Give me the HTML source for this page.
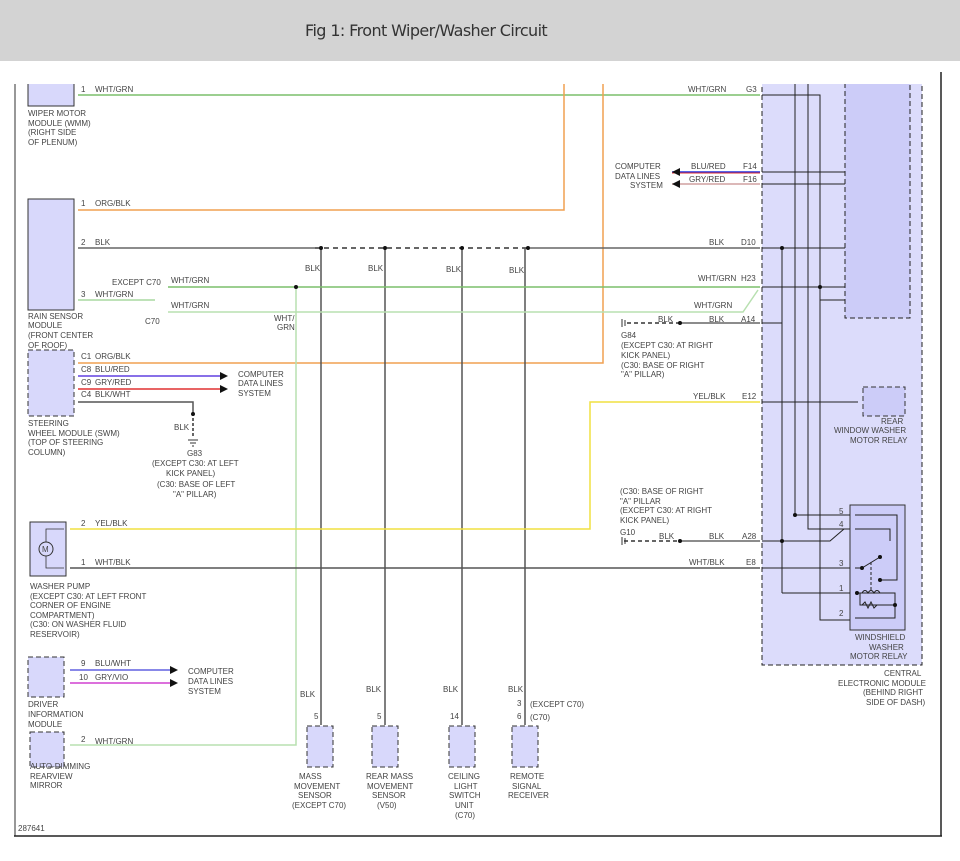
<!DOCTYPE html>
<html><head><meta charset="utf-8"><style>
html,body{margin:0;padding:0;background:#fff;width:960px;height:861px;overflow:hidden}
.hd{position:absolute;left:0;top:0;width:960px;height:61px;background:#d3d3d3;z-index:2}
.hd span{position:absolute;left:305px;top:21px;font:16px "DejaVu Sans","Liberation Sans",sans-serif;color:#333;letter-spacing:-0.6px}
svg{position:absolute;left:0;top:0}
text{font-family:"Liberation Sans",sans-serif;font-size:8px;fill:#444}
</style></head><body>
<div class="hd"><span>Fig 1: Front Wiper/Washer Circuit</span></div>
<svg width="960" height="861" viewBox="0 0 960 861">
<!-- CEM -->
<rect x="762" y="70" width="160" height="595" fill="#dcdcfb" stroke="#222" stroke-dasharray="5,3"/>
<rect x="845" y="70" width="65" height="248" fill="#ccccf8" stroke="#222" stroke-dasharray="5,3"/>
<!-- modules -->
<rect x="28" y="70" width="46" height="36" fill="#d8d8fb" stroke="#333"/>
<rect x="28" y="199" width="46" height="111" fill="#d8d8fb" stroke="#333"/>
<rect x="28" y="350" width="46" height="66" fill="#d8d8fb" stroke="#333" stroke-dasharray="5,3"/>
<rect x="30" y="522" width="36" height="54" fill="#d8d8fb" stroke="#333"/>
<circle cx="46" cy="549" r="7" fill="none" stroke="#333"/><text x="42" y="552" font-size="8">M</text>
<path d="M46 542V529H64M46 556V568H64" fill="none" stroke="#333" stroke-width=".8"/>
<rect x="28" y="657" width="36" height="40" fill="#d8d8fb" stroke="#333" stroke-dasharray="5,3"/>
<rect x="30" y="732" width="34" height="35" fill="#d8d8fb" stroke="#333" stroke-dasharray="5,3"/>
<rect x="307" y="726" width="26" height="41" fill="#d8d8fb" stroke="#333" stroke-dasharray="5,3"/>
<rect x="372" y="726" width="26" height="41" fill="#d8d8fb" stroke="#333" stroke-dasharray="5,3"/>
<rect x="449" y="726" width="26" height="41" fill="#d8d8fb" stroke="#333" stroke-dasharray="5,3"/>
<rect x="512" y="726" width="26" height="41" fill="#d8d8fb" stroke="#333" stroke-dasharray="5,3"/>
<rect x="863" y="387" width="42" height="29" fill="#ccccf8" stroke="#333" stroke-dasharray="5,3"/>
<rect x="850" y="505" width="55" height="125" fill="#ccccf8" stroke="#333"/>
<!-- wires -->
<g fill="none" stroke-width="1.5">
<line x1="78" y1="95" x2="760" y2="95" stroke="#7cbf6b"/>
<path d="M78 210H564V70" stroke="#f0a050"/>
<path d="M78 363H603V70" stroke="#f0a050"/>
<path d="M78 248H315" stroke="#666"/>
<path d="M315 248H530" stroke="#333" stroke-dasharray="5,4"/>
<path d="M530 248H760" stroke="#666"/>
<path d="M321 248V725M385 248V725M462 248V725M525 248V725" stroke="#555"/>
<path d="M78 300H155" stroke="#a8d8a0"/>
<path d="M168 287H760" stroke="#7cbf6b"/>
<path d="M168 312H743L758 290" stroke="#b8e0b0"/>
<path d="M296 287V745H70" stroke="#b8e0b0"/>
<path d="M627 323H680" stroke="#333" stroke-dasharray="4,3"/>
<path d="M680 323H760" stroke="#666"/>
<path d="M78 376H220" stroke="#6040e0"/>
<path d="M78 389H220" stroke="#e03030"/>
<path d="M78 402H193V416" stroke="#555"/>
<path d="M193 418V438" stroke="#333" stroke-dasharray="3,2"/>
<path d="M70 529H590V402H760" stroke="#f0e040"/>
<path d="M70 568H760" stroke="#555"/>
<path d="M70 670H170" stroke="#6060e0"/>
<path d="M70 683H170" stroke="#d040d0"/>
<path d="M672 172H760" stroke="#2030e0"/><path d="M672 172H760" stroke="#e03030" stroke-width="1" transform="translate(0,1)"/>
<path d="M672 184H760" stroke="#d0a0a0"/>
<path d="M624 541H680" stroke="#333" stroke-dasharray="4,3"/>
<path d="M680 541H760" stroke="#666"/>
</g>
<!-- CEM internal -->
<g fill="none" stroke="#222" stroke-width="1">
<path d="M762 95H820V620H850"/>
<path d="M795 70V515H850M808 70V529H850"/>
<path d="M762 172H845M762 184H845M762 248H845M762 287H845"/>
<path d="M820 300H845"/>
<path d="M782 248V323H762"/>
<path d="M762 402H858"/>
<path d="M762 541H830L844 529"/>
<path d="M762 568H850"/>
<path d="M782 593H850"/><path d="M782 248V593"/>
<path d="M855 529H890V541M855 515H897V580H880"/>
<path d="M855 568H862L880 557"/><path d="M871 562V590" stroke-dasharray="3,2"/>
<path d="M855 593H895V618H855M860 593V605H895"/>
<path d="M862 593q3-5 6 0q3-5 6 0q3-5 6 0"/><path d="M862 605l3-3 3 6 3-6 3 6 3-3h10"/>
</g>
<g fill="#111">
<circle cx="321" cy="248" r="2"/><circle cx="385" cy="248" r="2"/><circle cx="462" cy="248" r="2"/><circle cx="528" cy="248" r="2"/>
<circle cx="296" cy="287" r="2"/><circle cx="193" cy="414" r="2"/><circle cx="680" cy="323" r="2"/><circle cx="680" cy="541" r="2"/>
<circle cx="782" cy="248" r="2"/><circle cx="820" cy="287" r="2"/><circle cx="795" cy="515" r="2"/><circle cx="782" cy="541" r="2"/>
<circle cx="880" cy="557" r="2"/><circle cx="862" cy="568" r="2"/><circle cx="880" cy="580" r="2"/><circle cx="857" cy="593" r="2"/><circle cx="895" cy="605" r="2"/>
<path d="M220 372l8 4-8 4zM220 385l8 4-8 4zM170 666l8 4-8 4zM170 679l8 4-8 4zM680 168l-8 4 8 4zM680 180l-8 4 8 4z"/>
</g>
<path d="M188 440h10M190 443h6M192 446h2M622 319v8M625 320v6M622 537v8M625 538v6" stroke="#333"/>
<!-- white cover above frame -->
<rect x="0" y="61" width="960" height="23" fill="#fff"/>
<!-- frame -->
<line x1="15" y1="84" x2="15" y2="836" stroke="#777" stroke-width="1.5"/>
<line x1="14" y1="836" x2="942" y2="836" stroke="#222" stroke-width="1.5"/>
<line x1="941" y1="72" x2="941" y2="836" stroke="#222" stroke-width="1.5"/>
<!-- labels -->
<text x="81" y="92">1</text><text x="95" y="92">WHT/GRN</text>
<text x="28" y="116">WIPER MOTOR</text><text x="28" y="126">MODULE (WMM)</text><text x="28" y="135">(RIGHT SIDE</text><text x="28" y="145">OF PLENUM)</text>
<text x="81" y="206">1</text><text x="95" y="206">ORG/BLK</text>
<text x="81" y="245">2</text><text x="95" y="245">BLK</text>
<text x="81" y="297">3</text><text x="95" y="297">WHT/GRN</text>
<text x="112" y="285">EXCEPT C70</text><text x="171" y="283">WHT/GRN</text><text x="171" y="308">WHT/GRN</text><text x="145" y="324">C70</text>
<text x="274" y="321">WHT/</text><text x="277" y="330">GRN</text>
<text x="305" y="271">BLK</text><text x="368" y="271">BLK</text><text x="446" y="272">BLK</text><text x="509" y="273">BLK</text>
<text x="28" y="319">RAIN SENSOR</text><text x="28" y="328">MODULE</text><text x="28" y="338">(FRONT CENTER</text><text x="28" y="348">OF ROOF)</text>
<text x="81" y="359">C1</text><text x="95" y="359">ORG/BLK</text>
<text x="81" y="372">C8</text><text x="95" y="372">BLU/RED</text>
<text x="81" y="385">C9</text><text x="95" y="385">GRY/RED</text>
<text x="81" y="397">C4</text><text x="95" y="397">BLK/WHT</text>
<text x="238" y="377">COMPUTER</text><text x="238" y="386">DATA LINES</text><text x="238" y="396">SYSTEM</text>
<text x="174" y="430">BLK</text>
<text x="28" y="426">STEERING</text><text x="28" y="436">WHEEL MODULE (SWM)</text><text x="28" y="445">(TOP OF STEERING</text><text x="28" y="455">COLUMN)</text>
<text x="187" y="456">G83</text><text x="152" y="466">(EXCEPT C30: AT LEFT</text><text x="166" y="476">KICK PANEL)</text><text x="157" y="487">(C30: BASE OF LEFT</text><text x="173" y="497">"A" PILLAR)</text>
<text x="81" y="526">2</text><text x="95" y="526">YEL/BLK</text>
<text x="81" y="565">1</text><text x="95" y="565">WHT/BLK</text>
<text x="30" y="589">WASHER PUMP</text><text x="30" y="599">(EXCEPT C30: AT LEFT FRONT</text><text x="30" y="608">CORNER OF ENGINE</text><text x="30" y="618">COMPARTMENT)</text><text x="30" y="627">(C30: ON WASHER FLUID</text><text x="30" y="637">RESERVOIR)</text>
<text x="81" y="666">9</text><text x="95" y="666">BLU/WHT</text>
<text x="79" y="680">10</text><text x="95" y="680">GRY/VIO</text>
<text x="188" y="674">COMPUTER</text><text x="188" y="684">DATA LINES</text><text x="188" y="694">SYSTEM</text>
<text x="28" y="707">DRIVER</text><text x="28" y="717">INFORMATION</text><text x="28" y="727">MODULE</text>
<text x="81" y="742">2</text><text x="95" y="744">WHT/GRN</text>
<text x="30" y="769">AUTO-DIMMING</text><text x="30" y="779">REARVIEW</text><text x="30" y="788">MIRROR</text>
<text x="300" y="697">BLK</text><text x="366" y="692">BLK</text><text x="443" y="692">BLK</text><text x="508" y="692">BLK</text>
<text x="314" y="719">5</text><text x="377" y="719">5</text><text x="450" y="719">14</text><text x="517" y="706">3</text><text x="517" y="719">6</text>
<text x="530" y="707">(EXCEPT C70)</text><text x="530" y="720">(C70)</text>
<text x="299" y="779">MASS</text><text x="294" y="789">MOVEMENT</text><text x="298" y="798">SENSOR</text><text x="292" y="808">(EXCEPT C70)</text>
<text x="366" y="779">REAR MASS</text><text x="367" y="789">MOVEMENT</text><text x="372" y="798">SENSOR</text><text x="377" y="808">(V50)</text>
<text x="448" y="779">CEILING</text><text x="454" y="789">LIGHT</text><text x="449" y="798">SWITCH</text><text x="455" y="808">UNIT</text><text x="455" y="818">(C70)</text>
<text x="510" y="779">REMOTE</text><text x="512" y="789">SIGNAL</text><text x="508" y="798">RECEIVER</text>
<text x="18" y="831">287641</text>
<text x="688" y="92">WHT/GRN</text><text x="746" y="92">G3</text>
<text x="615" y="169">COMPUTER</text><text x="615" y="179">DATA LINES</text><text x="630" y="188">SYSTEM</text>
<text x="691" y="169">BLU/RED</text><text x="743" y="169">F14</text>
<text x="689" y="182">GRY/RED</text><text x="743" y="182">F16</text>
<text x="709" y="245">BLK</text><text x="741" y="245">D10</text>
<text x="698" y="281">WHT/GRN</text><text x="741" y="281">H23</text>
<text x="694" y="308">WHT/GRN</text>
<text x="658" y="322">BLK</text><text x="709" y="322">BLK</text><text x="741" y="322">A14</text>
<text x="621" y="338">G84</text><text x="621" y="348">(EXCEPT C30: AT RIGHT</text><text x="621" y="358">KICK PANEL)</text><text x="621" y="368">(C30: BASE OF RIGHT</text><text x="621" y="377">"A" PILLAR)</text>
<text x="693" y="399">YEL/BLK</text><text x="742" y="399">E12</text>
<text x="881" y="424">REAR</text><text x="834" y="433">WINDOW WASHER</text><text x="850" y="443">MOTOR RELAY</text>
<text x="620" y="494">(C30: BASE OF RIGHT</text><text x="620" y="504">"A" PILLAR</text><text x="620" y="513">(EXCEPT C30: AT RIGHT</text><text x="620" y="523">KICK PANEL)</text>
<text x="620" y="535">G10</text><text x="659" y="539">BLK</text><text x="709" y="539">BLK</text><text x="742" y="539">A28</text>
<text x="689" y="565">WHT/BLK</text><text x="746" y="565">E8</text>
<text x="839" y="514">5</text><text x="839" y="527">4</text><text x="839" y="566">3</text><text x="839" y="591">1</text><text x="839" y="616">2</text>
<text x="855" y="640">WINDSHIELD</text><text x="869" y="650">WASHER</text><text x="850" y="659">MOTOR RELAY</text>
<text x="884" y="676">CENTRAL</text><text x="838" y="686">ELECTRONIC MODULE</text><text x="863" y="695">(BEHIND RIGHT</text><text x="866" y="705">SIDE OF DASH)</text>
</svg>
</body></html>
